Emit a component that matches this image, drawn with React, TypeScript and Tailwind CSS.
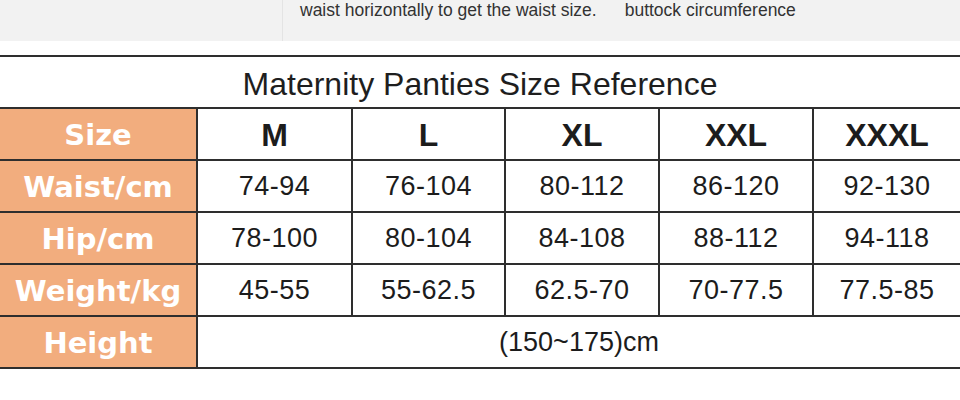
const sizes = ["M", "L", "XL", "XXL", "XXXL"];

const rows = [
  { label: "Waist/cm", values: ["74-94", "76-104", "80-112", "86-120", "92-130"] },
  { label: "Hip/cm", values: ["78-100", "80-104", "84-108", "88-112", "94-118"] },
  { label: "Weight/kg", values: ["45-55", "55-62.5", "62.5-70", "70-77.5", "77.5-85"] },
];

function Label({ children }: { children: React.ReactNode }) {
  return (
    <div className="h-[52px] pt-[3px] border-t-2 border-[#2e2e2e] bg-[#f2ad7e] flex items-center justify-center text-white font-bold text-[29px] font-['DejaVu_Sans',sans-serif]">
      {children}
    </div>
  );
}

function Cell({ children, bold }: { children: React.ReactNode; bold?: boolean }) {
  return (
    <div
      className={`h-[52px] pt-[1px] border-t-2 border-l-2 border-[#2e2e2e] flex items-center justify-center text-[#1c1c1c] ${
        bold ? "font-bold text-[32px]" : "text-[27px] tracking-[0.5px]"
      }`}
    >
      {children}
    </div>
  );
}

export default function App() {
  return (
    <div className="w-[960px] h-[400px] bg-white overflow-hidden font-['Liberation_Sans',Arial,sans-serif]">
      {/* cropped instruction strip */}
      <div className="h-[41px] bg-[#f2f2f2] flex">
        <div className="w-[283px] border-r border-[#e4e4e4]" />
        <div className="flex gap-[28px] pl-[17px] text-[17.5px] text-[#333] leading-[20px]">
          <span>waist horizontally to get the waist size.</span>
          <span>buttock circumference</span>
        </div>
      </div>

      <div className="mt-[14px] border-t-2 border-[#2e2e2e]">
        <div className="h-[50px] flex items-center justify-center text-[32px] text-[#1e1e1e] pt-[4px]">
          Maternity Panties Size Reference
        </div>

        <div className="grid grid-cols-[196px_155px_153px_154px_154px_1fr] border-b-2 border-[#2e2e2e]">
          <Label>Size</Label>
          {sizes.map((s) => (
            <Cell key={s} bold>
              {s}
            </Cell>
          ))}

          {rows.map((r) => (
            <>
              <Label key={r.label}>{r.label}</Label>
              {r.values.map((v, i) => (
                <Cell key={r.label + i}>{v}</Cell>
              ))}
            </>
          ))}

          <Label>Height</Label>
          <div className="col-span-5 h-[52px] pt-[1px] border-t-2 border-l-2 border-[#2e2e2e] flex items-center justify-center text-[27px] text-[#1c1c1c]">
            (150~175)cm
          </div>
        </div>
      </div>
    </div>
  );
}
